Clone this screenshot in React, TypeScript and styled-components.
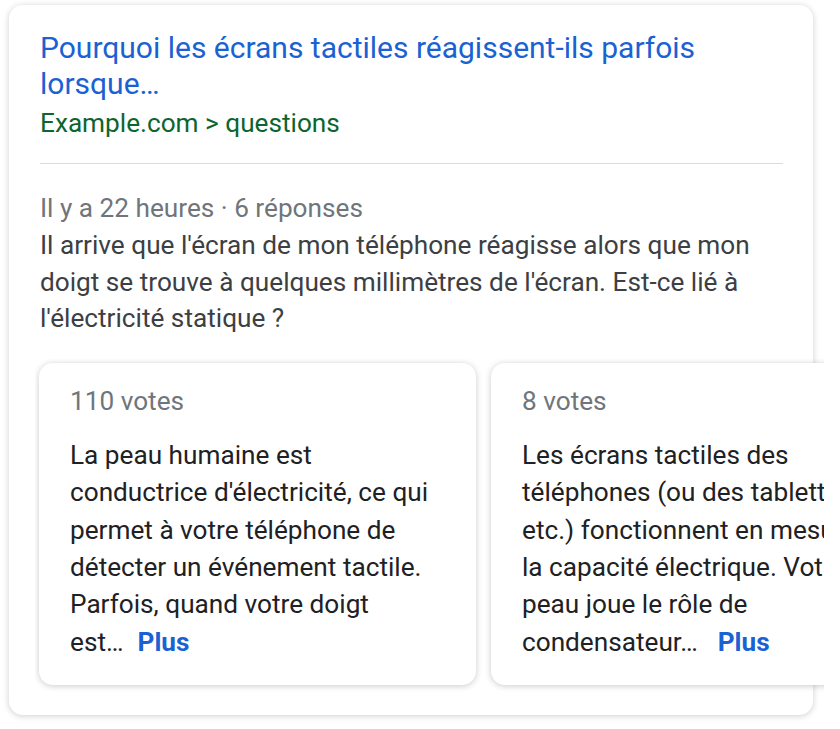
import React from "react";
import styled, { createGlobalStyle } from "styled-components";

const Global = createGlobalStyle`
  html, body { margin: 0; padding: 0; background: #ffffff; }
  body { font-family: Roboto, "Liberation Sans", Arial, sans-serif; }
`;

const Page = styled.div`
  padding: 5px 0 0 9px;
  width: 840px;
  height: 729px;
  box-sizing: border-box;
  overflow: hidden;
`;

const Card = styled.div`
  width: 804px;
  height: 710px;
  box-sizing: border-box;
  background: #fff;
  border-radius: 14px;
  box-shadow: 0 1px 6px rgba(32, 33, 36, 0.22);
  padding: 25px 30px 0 30px;
  display: flex;
  flex-direction: column;
`;

const Title = styled.a`
  display: block;
  color: #1a62d3;
  font-size: 30px;
  line-height: 36px;
  text-decoration: none;
  padding-left: 1px;
`;

const Crumb = styled.div`
  color: #0d652d;
  font-size: 26.2px;
  line-height: 30px;
  padding-left: 1px;
  margin-top: 5.7px;
`;

const Divider = styled.hr`
  border: none;
  border-top: 1px solid #dadce0;
  margin: 25px 0 29px 1px;
`;

const Meta = styled.div`
  color: #70757a;
  font-size: 26.2px;
  line-height: 30px;
  padding-left: 1px;
`;

const Body = styled.p`
  margin: 4.8px 0 0 0;
  color: #3c4043;
  font-size: 26.2px;
  line-height: 36.5px;
  padding-left: 1px;
`;

const Carousel = styled.div`
  display: flex;
  gap: 15px;
  margin: 21.7px -41px 0 -4px;
  padding: 4px 0 8px 4px;
  overflow: hidden;
`;

const Answer = styled.div`
  flex: 0 0 437px;
  height: 322px;
  box-sizing: border-box;
  background: #fff;
  border-radius: 14px;
  box-shadow: 0 1px 6px rgba(32, 33, 36, 0.24);
  padding: 23px 40px 0 31px;
`;

const Votes = styled.div`
  color: #70757a;
  font-size: 26.2px;
  line-height: 30px;
`;

const AnswerText = styled.p`
  margin: 21.3px 0 0 0;
  color: #202124;
  font-size: 26.2px;
  line-height: 37.35px;
`;

const Tail = styled.span`
  white-space: nowrap;
`;

const More = styled.a<{ $gap: number }>`
  color: #1a62d3;
  font-weight: bold;
  text-decoration: none;
  margin-left: ${(p) => p.$gap}px;
`;

const answers = [
  {
    votes: "110 votes",
    gap: 14,
    text:
      "La peau humaine est conductrice d'électricité, ce qui permet à votre téléphone de détecter un événement tactile. Parfois, quand votre doigt est…",
  },
  {
    votes: "8 votes",
    gap: 20,
    text:
      "Les écrans tactiles des téléphones (ou des tablettes, etc.) fonctionnent en mesurant la capacité électrique. Votre peau joue le rôle de condensateur…",
  },
];

function splitLast(text: string): [string, string] {
  const i = text.lastIndexOf(" ");
  return [text.slice(0, i + 1), text.slice(i + 1)];
}

export default function App() {
  return (
    <>
      <Global />
      <Page>
        <Card>
          <Title href="#">Pourquoi les écrans tactiles réagissent-ils parfois lorsque…</Title>
          <Crumb>Example.com &gt; questions</Crumb>
          <Divider />
          <Meta>Il y a 22 heures · 6 réponses</Meta>
          <Body>
            Il arrive que l'écran de mon téléphone réagisse alors que mon doigt se trouve à
            quelques millimètres de l'écran. Est-ce lié à l'électricité statique ?
          </Body>
          <Carousel>
            {answers.map((a) => {
              const [head, last] = splitLast(a.text);
              return (
                <Answer key={a.votes}>
                  <Votes>{a.votes}</Votes>
                  <AnswerText>
                    {head}
                    <Tail>
                      {last}
                      <More href="#" $gap={a.gap}>
                        Plus
                      </More>
                    </Tail>
                  </AnswerText>
                </Answer>
              );
            })}
          </Carousel>
        </Card>
      </Page>
    </>
  );
}
